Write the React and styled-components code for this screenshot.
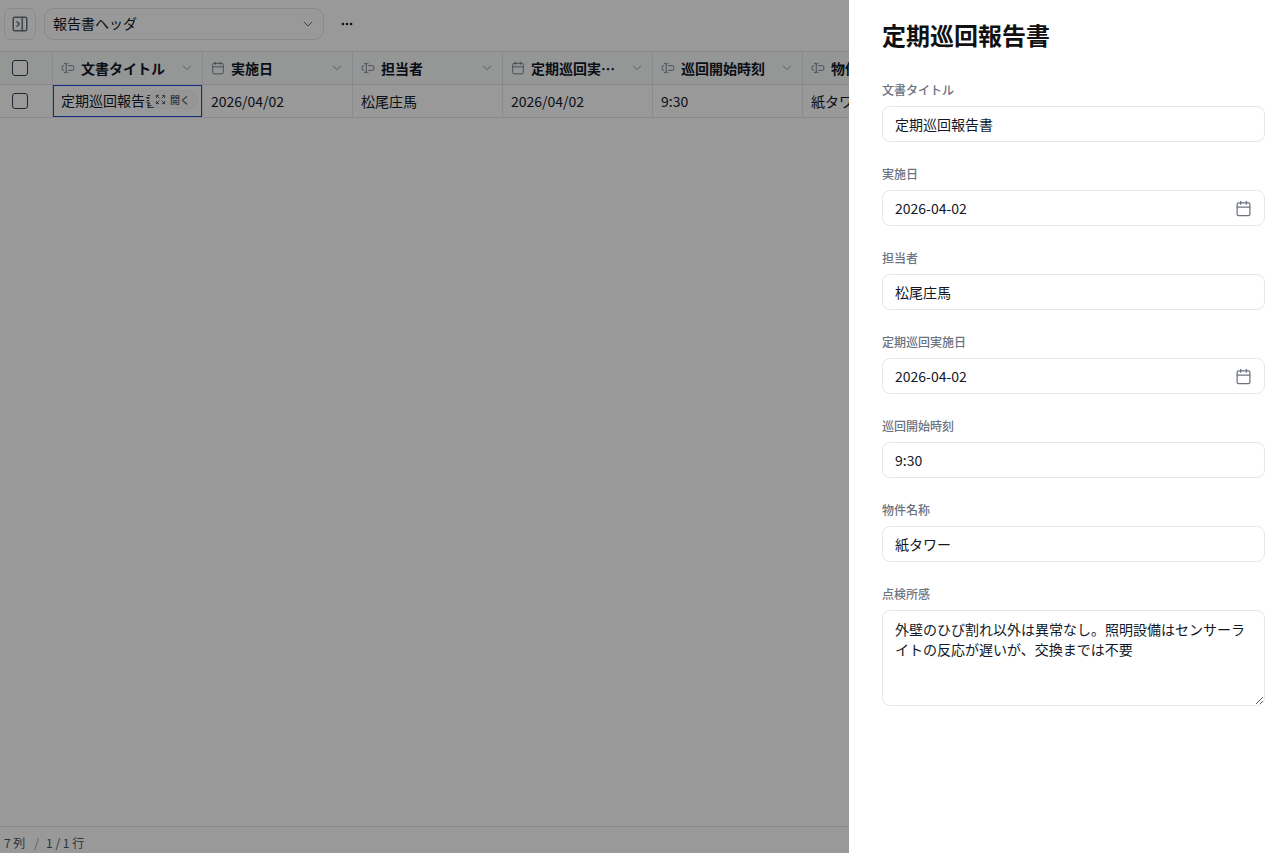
import React from "react";
import styled, { createGlobalStyle } from "styled-components";
import { Calendar, ChevronDown, Ellipsis, Expand, PanelRightClose, TextCursorInput } from "lucide-react";

const Global = createGlobalStyle`
  * { box-sizing: border-box; }
  html, body { margin: 0; height: 100%; overflow: hidden; background: #fff; }
  body { font-family: "Noto Sans CJK JP", "Noto Sans", sans-serif; color: #111827; }
`;

const Page = styled.div`
  height: 853px;
  display: flex;
  flex-direction: column;
  background: #fff;
  overflow: hidden;
`;
const Toolbar = styled.div`
  height: 51px;
  flex: none;
  display: flex;
  align-items: center;
  gap: 8px;
  padding: 0 4px 3px;
`;
const IconButton = styled.button`
  width: 32px;
  height: 32px;
  padding: 0;
  display: flex;
  align-items: center;
  justify-content: center;
  background: #fff;
  border: 1px solid #e5e7eb;
  border-radius: 8px;
  color: #6b7280;
`;
const ViewSelect = styled.div`
  width: 280px;
  height: 32px;
  display: flex;
  align-items: center;
  justify-content: space-between;
  padding: 0 7px 0 8px;
  background: #fff;
  border: 1px solid #e5e7eb;
  border-radius: 10px;
  font-size: 14px;
  color: #111827;
  svg { color: #6b7280; }
`;
const ViewName = styled.span`
  margin-top: -2px;
`;
const MoreButton = styled.button`
  width: 28px;
  height: 28px;
  margin-left: 1px;
  padding: 0;
  display: flex;
  align-items: center;
  justify-content: center;
  border: 0;
  background: transparent;
  color: #111827;
`;
const Table = styled.div`
  flex: none;
  display: grid;
  grid-template-columns: 53px repeat(7, 150px);
  width: max-content;
  border-top: 1px solid #e5e7eb;
`;
const HeadCell = styled.div`
  height: 33px;
  display: flex;
  align-items: center;
  gap: 6px;
  padding: 0 8px;
  background: #f9fafb;
  border-right: 1px solid #e5e7eb;
  border-bottom: 1px solid #e5e7eb;
  font-size: 14px;
  font-weight: 700;
  color: #111827;
  > svg { flex: none; color: #6b7280; }
`;
const HeadLabel = styled.span`
  flex: 1;
  min-width: 0;
  white-space: nowrap;
  overflow: hidden;
  text-overflow: ellipsis;
`;
const CheckCell = styled.div`
  height: 33px;
  display: flex;
  align-items: center;
  justify-content: center;
  padding-right: 13px;
  background: ${p => (p.$head ? "#f9fafb" : "#fff")};
  border-right: 1px solid #e5e7eb;
  border-bottom: 1px solid #e5e7eb;
`;
const Check = styled.span`
  width: 16px;
  height: 16px;
  border: 1px solid #374151;
  border-radius: 3px;
  background: #fff;
`;
const Cell = styled.div`
  position: relative;
  height: 33px;
  display: flex;
  align-items: center;
  padding: 0 8px ${p => (p.$active ? "2px" : "0")};
  border-right: 1px solid #e5e7eb;
  border-bottom: 1px solid #e5e7eb;
  ${p => p.$active && "box-shadow: inset 0 0 0 1px #1d4ed8;"}
  font-size: 14px;
  color: #111827;
  white-space: nowrap;
  overflow: hidden;
`;
const OpenPill = styled.span`
  position: absolute;
  top: 5px;
  right: 4px;
  height: 19px;
  display: flex;
  align-items: center;
  gap: 4px;
  padding: 0 7px 1px 5px;
  border: 1px solid #f3f4f6;
  border-radius: 10px;
  background: #fbfbfc;
  font-size: 10px;
  font-weight: 500;
  color: #4b5563;
`;
const Spacer = styled.div`
  flex: 1;
`;
const Footer = styled.div`
  height: 27px;
  flex: none;
  display: flex;
  gap: 9px;
  padding: 7px 4px 0;
  border-top: 1px solid #e5e7eb;
  font-size: 12px;
  line-height: 18px;
  color: #4b5563;
  white-space: pre;
`;
const Slash = styled.span`
  margin-right: -2px;
  color: #9ca3af;
`;
const Overlay = styled.div`
  position: fixed;
  inset: 0;
  background: rgba(0, 0, 0, 0.4);
`;
const Panel = styled.aside`
  position: fixed;
  top: 0;
  right: 0;
  bottom: 0;
  width: 421px;
  padding: 19px 5px 0 33px;
  background: #fff;
`;
const Title = styled.h2`
  margin: 0 0 31px;
  font-size: 24px;
  line-height: 32px;
  font-weight: 700;
  color: #111;
`;
const Form = styled.div`
  display: flex;
  flex-direction: column;
  gap: 24px;
`;
const Field = styled.div`
  display: flex;
  flex-direction: column;
  gap: 8px;
`;
const Label = styled.label`
  font-size: 12px;
  line-height: 16px;
  font-weight: 500;
  color: #6b7280;
`;
const InputBox = styled.div`
  height: 36px;
  display: flex;
  align-items: center;
  padding: 0 12px;
  border: 1px solid #e5e7eb;
  border-radius: 8px;
  background: #fff;
  svg { flex: none; color: #6b7280; }
`;
const Input = styled.input`
  flex: 1;
  min-width: 0;
  border: 0;
  padding: 0;
  outline: 0;
  background: transparent;
  font: inherit;
  font-size: 14px;
  color: #111827;
`;
const TextArea = styled.textarea`
  display: block;
  width: 100%;
  height: 96px;
  padding: 8px 12px;
  border: 1px solid #e5e7eb;
  border-radius: 8px;
  outline: 0;
  background: #fff;
  font: inherit;
  font-size: 14px;
  line-height: 20px;
  color: #111827;
`;

const columns = [
  ["文書タイトル", "text"],
  ["実施日", "date"],
  ["担当者", "text"],
  ["定期巡回実施日", "date"],
  ["巡回開始時刻", "text"],
  ["物件名称", "text"],
  ["点検所感", "text"],
];
const row = ["定期巡回報告書", "2026/04/02", "松尾庄馬", "2026/04/02", "9:30", "紙タワー", "外壁のひび割れ以外は異常なし。"];
const fields = [
  ["文書タイトル", "定期巡回報告書"],
  ["実施日", "2026-04-02", true],
  ["担当者", "松尾庄馬"],
  ["定期巡回実施日", "2026-04-02", true],
  ["巡回開始時刻", "9:30"],
  ["物件名称", "紙タワー"],
];

export default function App() {
  return (
    <>
      <Global />
      <Page>
        <Toolbar>
          <IconButton aria-label="panel"><PanelRightClose size={18} strokeWidth={2} /></IconButton>
          <ViewSelect><ViewName>報告書ヘッダ</ViewName><ChevronDown size={16} strokeWidth={1.5} /></ViewSelect>
          <MoreButton aria-label="more"><Ellipsis size={14} strokeWidth={2.5} /></MoreButton>
        </Toolbar>
        <Table>
          <CheckCell $head><Check /></CheckCell>
          {columns.map(([name, type]) => (
            <HeadCell key={name}>
              {type === "date" ? <Calendar size={14} strokeWidth={1.5} /> : <TextCursorInput size={14} strokeWidth={1.5} />}
              <HeadLabel>{name}</HeadLabel>
              <ChevronDown size={14} strokeWidth={1.25} />
            </HeadCell>
          ))}
          <CheckCell><Check /></CheckCell>
          {row.map((value, i) => (
            <Cell key={i} $active={i === 0}>
              {value}
              {i === 0 && <OpenPill><Expand size={11} strokeWidth={2} />開く</OpenPill>}
            </Cell>
          ))}
        </Table>
        <Spacer />
        <Footer>
          <span>7 列</span><Slash>/</Slash><span>1 / 1 行</span>
        </Footer>
      </Page>
      <Overlay />
      <Panel>
        <Title>定期巡回報告書</Title>
        <Form>
          {fields.map(([label, value, date]) => (
            <Field key={label}>
              <Label>{label}</Label>
              <InputBox>
                <Input readOnly value={value} />
                {date && <Calendar size={17} strokeWidth={1.75} />}
              </InputBox>
            </Field>
          ))}
          <Field>
            <Label>点検所感</Label>
            <TextArea readOnly value="外壁のひび割れ以外は異常なし。照明設備はセンサーライトの反応が遅いが、交換までは不要" />
          </Field>
        </Form>
      </Panel>
    </>
  );
}
